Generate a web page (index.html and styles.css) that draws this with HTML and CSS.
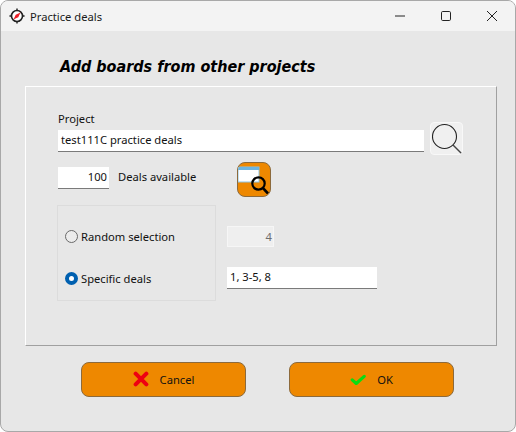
FILE: index.html
```html
<!DOCTYPE html>
<html lang="en">
<head>
    <meta charset="UTF-8">
    <title>Practice deals</title>
    <link rel="stylesheet" href="styles.css">
</head>
<body>
    <div class="window">
        <!-- title bar -->
        <header class="titlebar">
            <svg class="app-icon" width="16" height="16" viewBox="0 0 18 18">
                <circle cx="9" cy="9" r="6.2" fill="#fff" stroke="#222" stroke-width="1.8"/>
                <path d="M9 0.5v2M9 15.5v2M0.5 9h2M15.5 9h2" stroke="#222" stroke-width="1.6"/>
                <path d="M13 5L10.4 10.4L5 13L7.6 7.6Z" fill="#ee1c25"/>
            </svg>
            <span class="title">Practice deals</span>
            <div class="win-controls">
                <span class="win-btn">
                    <svg width="12" height="12" viewBox="0 0 12 12"><path d="M1 6h10" stroke="#222"/></svg>
                </span>
                <span class="win-btn">
                    <svg width="12" height="12" viewBox="0 0 12 12"><rect x="1.5" y="1.5" width="9" height="9" rx="1.2" fill="none" stroke="#222"/></svg>
                </span>
                <span class="win-btn">
                    <svg width="12" height="12" viewBox="0 0 12 12"><path d="M1 1l10 10M11 1L1 11" stroke="#222"/></svg>
                </span>
            </div>
        </header>

        <div class="content">
            <h1 class="heading">Add boards from other projects</h1>

            <section class="panel">
                <label class="field-label">Project</label>
                <div class="project-row">
                    <div class="input project-input">test111C practice deals</div>
                    <button class="search-btn">
                        <svg width="34" height="34" viewBox="0 0 34 34">
                            <circle cx="14.5" cy="14.5" r="12" fill="none" stroke="#222" stroke-width="1.1"/>
                            <path d="M23 23L32 32" stroke="#444" stroke-width="1.4"/>
                        </svg>
                    </button>
                </div>

                <div class="deals-row">
                    <div class="input deals-input">100</div>
                    <span class="deals-label">Deals available</span>
                    <button class="browse-btn">
                        <svg width="34" height="34" viewBox="0 0 34 34">
                            <rect x="1" y="4" width="21" height="15" fill="#fff" stroke="#8cc4e4" stroke-width="1"/>
                            <rect x="1" y="4" width="21" height="3" fill="#6db5e0"/>
                            <circle cx="21.5" cy="20.5" r="6.2" fill="none" stroke="#000" stroke-width="2.2"/>
                            <path d="M26 25.2L31 30.5" stroke="#000" stroke-width="2.6"/>
                        </svg>
                    </button>
                </div>

                <div class="choice-row">
                    <div class="choice-box">
                        <label class="radio-line">
                            <span class="radio"></span>
                            Random selection
                        </label>
                        <label class="radio-line">
                            <span class="radio radio-on"></span>
                            Specific deals
                        </label>
                    </div>
                    <div class="choice-fields">
                        <div class="input count-input">4</div>
                        <div class="input specific-input">1, 3-5, 8</div>
                    </div>
                </div>
            </section>

            <footer class="buttons">
                <button class="btn">
                    <svg width="16" height="16" viewBox="0 0 18 18">
                        <path d="M3 3L15 15M15 3L3 15" stroke="#ee0011" stroke-width="4.6" stroke-linecap="round"/>
                    </svg>
                    <span>Cancel</span>
                </button>
                <button class="btn">
                    <svg width="16" height="16" viewBox="0 0 18 18">
                        <path d="M2.5 10L7 14L16 6" fill="none" stroke="#0add12" stroke-width="3.6" stroke-linecap="round" stroke-linejoin="round"/>
                    </svg>
                    <span>OK</span>
                </button>
            </footer>
        </div>
    </div>
</body>
</html>
```

FILE: styles.css
```css
* {
    margin: 0;
    padding: 0;
    box-sizing: border-box;
}

body {
    width: 516px;
    height: 432px;
    overflow: hidden;
    background-color: #fff;
    font-family: "Noto Sans", "Open Sans", sans-serif;
    font-size: 11.2px;
    color: #111;
}

.window {
    height: 100%;
    display: flex;
    flex-direction: column;
    background-color: #e7e7e7;
    border: 1px solid #a8a8a8;
    border-radius: 8px;
    overflow: hidden;
}

/* title bar */
.titlebar {
    height: 30px;
    flex-shrink: 0;
    display: flex;
    align-items: center;
    background-color: #f3f3f3;
    padding-left: 8px;
}

.app-icon {
    margin-right: 5px;
}

.title {
    color: #1a1a1a;
}

.win-controls {
    margin-left: auto;
    display: flex;
}

.win-btn {
    width: 46px;
    height: 30px;
    display: flex;
    align-items: center;
    justify-content: center;
}

/* main part */
.content {
    flex: 1;
    display: flex;
    flex-direction: column;
    padding: 0 18px 0 24px;
}

.heading {
    font-family: "DejaVu Sans Condensed", "DejaVu Sans", sans-serif;
    font-stretch: condensed;
    font-size: 16px;
    font-weight: 700;
    font-style: italic;
    color: #000;
    margin: 26px 0 9px 35px;
    line-height: 20px;
}

.panel {
    height: 260px;
    border-style: solid;
    border-width: 1px;
    border-color: #fff #a0a0a0 #a0a0a0 #fff;
    padding: 24px 0 0 32px;
}

.field-label {
    display: block;
    line-height: 16px;
}

.input {
    background-color: #fff;
    border-bottom: 1px solid #7a7a7a;
    line-height: 20px;
    padding: 0 3px;
}

.project-row {
    display: flex;
    align-items: flex-start;
}

.project-input {
    width: 366px;
    height: 22px;
    margin-top: 3px;
}

.search-btn {
    width: 33px;
    height: 33px;
    margin: -5px 0 0 6px;
    background-color: #f0f0f0;
    border: 1px solid #f8f8f8;
    border-radius: 4px;
    overflow: hidden;
    display: block;
}

.search-btn svg {
    display: block;
    margin: -1px;
}

.deals-row {
    display: flex;
    align-items: flex-start;
    margin-top: 7px;
}

.deals-input {
    width: 51px;
    height: 22px;
    text-align: right;
    margin-top: 5px;
    padding-right: 2px;
}

.deals-label {
    margin: 7px 0 0 9px;
    line-height: 16px;
    width: 119px;
}

.browse-btn {
    width: 34px;
    height: 35px;
    background-color: #ee8800;
    border: 1px solid #8c6a3c;
    border-radius: 8px;
    overflow: hidden;
}

.browse-btn svg {
    display: block;
    margin: -1px;
}

.choice-row {
    display: flex;
    margin-top: 8px;
    margin-left: -1px;
}

.choice-box {
    width: 159px;
    height: 96px;
    border: 1px solid #dcdcdc;
    display: flex;
    flex-direction: column;
    gap: 26px;
    padding: 22px 0 0 7px;
}

.radio-line {
    display: flex;
    align-items: center;
    gap: 3px;
    height: 16px;
}

.radio {
    width: 13px;
    height: 13px;
    border: 1px solid #6a6a6a;
    border-radius: 50%;
    background-color: #ececec;
}

.radio-on {
    border: 4px solid #0060b0;
    background-color: #fff;
}

.choice-fields {
    margin-left: 11px;
    padding-top: 21px;
    display: flex;
    flex-direction: column;
    gap: 20px;
}

.count-input {
    width: 47px;
    height: 21px;
    background-color: #efefef;
    border: 1px solid #f6f6f6;
    color: #6d6d6d;
    text-align: right;
    padding-right: 1px;
    line-height: 19px;
}

.specific-input {
    width: 150px;
    height: 22px;
}

/* bottom buttons */
.buttons {
    display: flex;
    gap: 43px;
    margin: 16px 0 0 56px;
}

.btn {
    width: 165px;
    height: 35px;
    background-color: #ee8800;
    border: 1px solid #8c6a3c;
    border-radius: 8px;
    display: flex;
    align-items: center;
    justify-content: center;
    gap: 11px;
    padding-bottom: 1px;
    font-family: "Noto Sans", sans-serif;
    font-size: 11.2px;
    color: #111;
}
```
